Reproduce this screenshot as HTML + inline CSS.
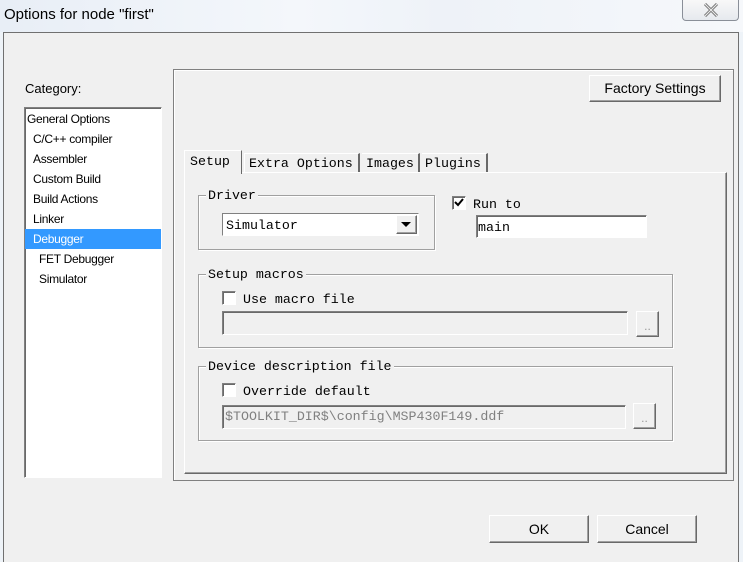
<!DOCTYPE html>
<html><head><meta charset="utf-8"><style>
*{margin:0;padding:0;box-sizing:border-box}
body{width:743px;height:556px;overflow:hidden;position:relative;background:#eef3f8;font-family:"Liberation Sans",sans-serif}
.a{position:absolute}
.m{font-family:"Liberation Mono",monospace;font-size:13.3px;color:#000;white-space:pre;margin-top:1px}
.s{font-size:12px;letter-spacing:-0.3px}
.grp{border:1px solid #a0a0a0;box-shadow:1px 1px 0 #fff inset,1px 1px 0 #fff}
.lg{background:#f0f0f0;padding:0 2px}
.btn{background:#f0f0f0;border:1px solid;border-color:#fff #696969 #696969 #fff;box-shadow:inset -1px -1px 0 #a0a0a0;text-align:center;font-size:14px}
.sunk{border:1px solid;border-color:#808080 #fff #fff #808080;box-shadow:inset 1px 1px 0 #696969}
.cb{width:14px;height:14px;background:#fff}
</style></head><body>
<div class="a" style="left:0;top:0;width:743px;height:32px;background:linear-gradient(90deg,#e8eef6,#f4f7fb 40%,#eef2f8 60%,#f6f8fb)"></div>
<div class="a" style="left:4px;top:6px;font-size:15px;color:#000">Options for node "first"</div>
<div class="a" style="left:682px;top:0;width:57px;height:21px;border:1px solid #8a8f98;border-top:none;border-radius:0 0 4px 4px;background:linear-gradient(#f8f8f8,#e6e9ee)"></div>
<svg class="a" style="left:703px;top:3px" width="16" height="14"><path d="M2 1 L14 13 M14 1 L2 13" stroke="#777" stroke-width="3"/><path d="M2 1 L14 13 M14 1 L2 13" stroke="#eee" stroke-width="1"/></svg>
<div class="a" style="left:3px;top:32px;width:736px;height:530px;background:#f0f0f0;border:1px solid #707070;border-bottom:none"></div>
<div class="a" style="left:25px;top:81px;font-size:13px">Category:</div>
<div class="a sunk" style="left:24px;top:107px;width:138px;height:371px;background:#fff"></div>
<div class="a s" style="left:27px;top:112px">General Options</div>
<div class="a s" style="left:33px;top:132px">C/C++ compiler</div>
<div class="a s" style="left:33px;top:152px">Assembler</div>
<div class="a s" style="left:33px;top:172px">Custom Build</div>
<div class="a s" style="left:33px;top:192px">Build Actions</div>
<div class="a s" style="left:33px;top:212px">Linker</div>
<div class="a" style="left:25px;top:229px;width:136px;height:20px;background:#3399ff"></div>
<div class="a s" style="left:33px;top:232px;color:#fff">Debugger</div>
<div class="a s" style="left:39px;top:252px">FET Debugger</div>
<div class="a s" style="left:39px;top:272px">Simulator</div>

<div class="a" style="left:173px;top:69px;width:561px;height:412px;border:1px solid #808080;box-shadow:inset 1px 1px 0 #fff"></div>
<div class="a btn" style="left:589px;top:75px;width:132px;height:27px;line-height:24px">Factory Settings</div>

<div class="a" style="left:184px;top:172px;width:543px;height:302px;border:1px solid;border-color:#fff #696969 #696969 #fff;box-shadow:inset -1px -1px 0 #a0a0a0"></div>
<div class="a" style="left:184px;top:150px;width:58px;height:24px;background:#f0f0f0;border:1px solid;border-color:#fff #696969 transparent #fff;border-bottom:none"></div>
<div class="a m" style="left:190px;top:153px">Setup</div>
<div class="a" style="left:244px;top:153px;width:116px;height:19px;border-right:2px solid #696969;border-left:1px solid #fff;border-top:1px solid #fff"></div>
<div class="a m" style="left:249px;top:155px">Extra Options</div>
<div class="a" style="left:362px;top:153px;width:58px;height:19px;border-right:2px solid #696969;border-top:1px solid #fff"></div>
<div class="a m" style="left:366px;top:155px">Images</div>
<div class="a" style="left:422px;top:153px;width:66px;height:19px;border-right:2px solid #696969;border-top:1px solid #fff"></div>
<div class="a m" style="left:425px;top:155px">Plugins</div>

<div class="a grp" style="left:198px;top:195px;width:237px;height:55px"></div>
<div class="a m lg" style="left:206px;top:187px">Driver</div>
<div class="a" style="left:222px;top:213px;width:197px;height:23px;background:#fff;border:1px solid;border-color:#808080 #fff #fff #808080"></div>
<div class="a m" style="left:226px;top:217px">Simulator</div>
<div class="a btn" style="left:396px;top:215px;width:21px;height:19px"></div>
<svg class="a" style="left:401px;top:222px" width="11" height="6"><path d="M0 0H10L5 5Z" fill="#000"/></svg>

<div class="a cb sunk" style="left:452px;top:196px"></div>
<svg class="a" style="left:454px;top:198px" width="10" height="10"><path d="M1 4 L4 7 L9 1" stroke="#000" stroke-width="2" fill="none"/></svg>
<div class="a m" style="left:473px;top:196px">Run to</div>
<div class="a sunk" style="left:476px;top:215px;width:171px;height:23px;background:#fff"></div>
<div class="a m" style="left:478px;top:219px">main</div>

<div class="a grp" style="left:198px;top:274px;width:475px;height:74px"></div>
<div class="a m lg" style="left:206px;top:266px">Setup macros</div>
<div class="a cb sunk" style="left:222px;top:291px"></div>
<div class="a m" style="left:243px;top:291px">Use macro file</div>
<div class="a sunk" style="left:222px;top:311px;width:406px;height:24px;background:#f0f0f0"></div>
<div class="a btn" style="left:636px;top:311px;width:23px;height:26px;color:#999;font-size:12px;line-height:28px">..</div>

<div class="a grp" style="left:198px;top:366px;width:475px;height:75px"></div>
<div class="a m lg" style="left:206px;top:358px">Device description file</div>
<div class="a cb sunk" style="left:222px;top:383px"></div>
<div class="a m" style="left:243px;top:383px">Override default</div>
<div class="a sunk" style="left:222px;top:405px;width:404px;height:24px;background:#f0f0f0"></div>
<div class="a m" style="left:225px;top:408px;color:#808080">$TOOLKIT_DIR$\config\MSP430F149.ddf</div>
<div class="a btn" style="left:633px;top:403px;width:23px;height:26px;color:#999;font-size:12px;line-height:28px">..</div>

<div class="a btn" style="left:489px;top:515px;width:100px;height:28px;line-height:26px">OK</div>
<div class="a btn" style="left:597px;top:515px;width:100px;height:28px;line-height:26px">Cancel</div>
</body></html>
